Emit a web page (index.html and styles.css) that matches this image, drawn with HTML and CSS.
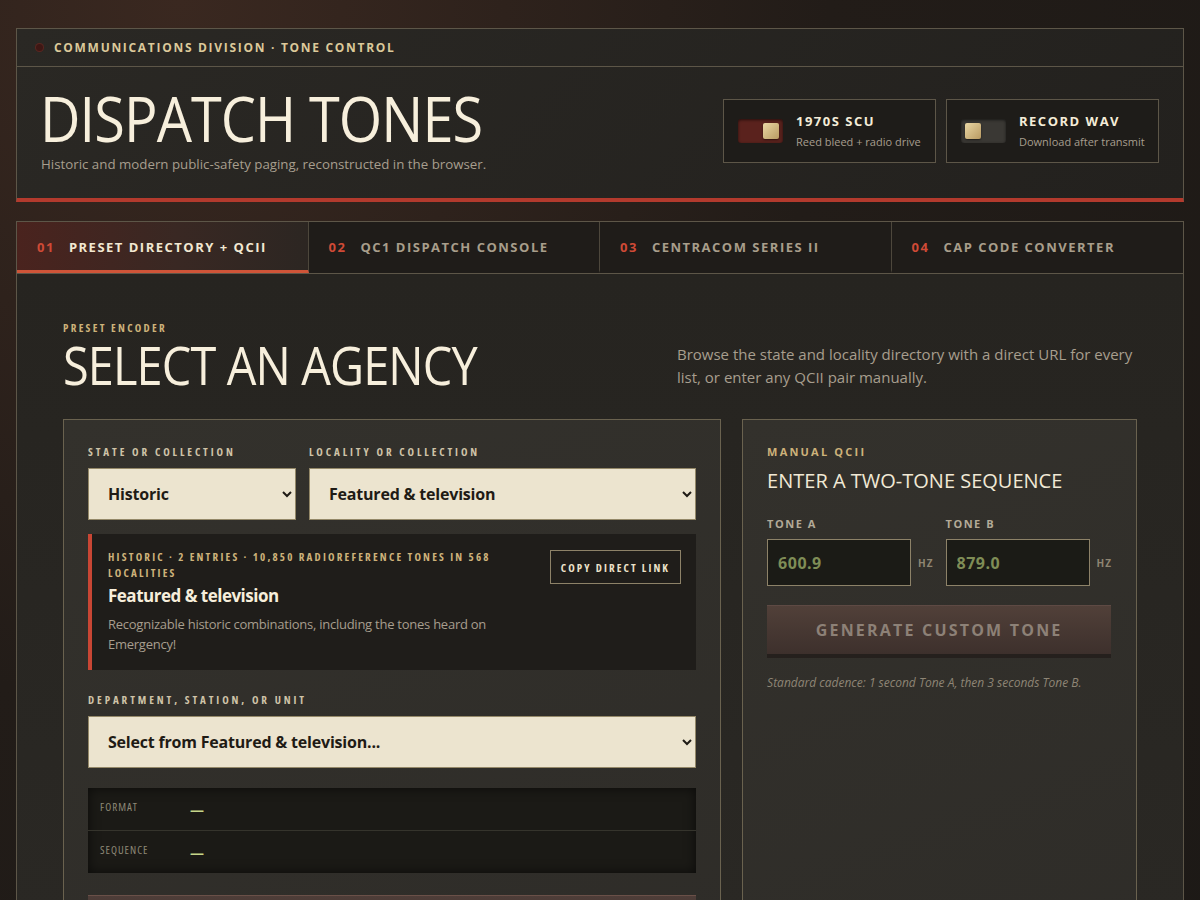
FILE: index.html
```html
<!DOCTYPE html>
<html lang="en">
<head>
    <meta charset="UTF-8">
    <meta name="viewport" content="width=device-width, initial-scale=1.0">
    <title>Dispatch Tones</title>
    <link rel="stylesheet" href="styles.css">
</head>
<body>

    <!-- Masthead -->
    <header class="masthead">
        <div class="masthead-bar">
            <span class="status-dot"></span>
            <span>Communications Division · Tone Control</span>
        </div>
        <div class="masthead-main">
            <div class="masthead-title">
                <h1>Dispatch Tones</h1>
                <p>Historic and modern public-safety paging, reconstructed in the browser.</p>
            </div>
            <div class="switches">
                <label class="switch-card">
                    <span class="switch on"><span class="knob"></span></span>
                    <span class="switch-text">
                        <strong>1970s SCU</strong>
                        <small>Reed bleed + radio drive</small>
                    </span>
                </label>
                <label class="switch-card">
                    <span class="switch"><span class="knob"></span></span>
                    <span class="switch-text">
                        <strong>Record WAV</strong>
                        <small>Download after transmit</small>
                    </span>
                </label>
            </div>
        </div>
    </header>

    <!-- Tabs -->
    <nav class="tabs">
        <button class="tab active"><span class="tab-num">01</span>Preset Directory + QCII</button>
        <button class="tab"><span class="tab-num">02</span>QC1 Dispatch Console</button>
        <button class="tab"><span class="tab-num">03</span>Centracom Series II</button>
        <button class="tab"><span class="tab-num">04</span>CAP Code Converter</button>
    </nav>

    <main class="panel">
        <div class="panel-head">
            <div>
                <div class="eyebrow">Preset Encoder</div>
                <h2>Select an Agency</h2>
            </div>
            <p class="panel-intro">Browse the state and locality directory with a direct URL for every list, or enter any QCII pair manually.</p>
        </div>

        <div class="panel-grid">
            <!-- Directory -->
            <section class="card">
                <div class="select-row">
                    <div class="field">
                        <label class="field-label" for="state">State or collection</label>
                        <select id="state" class="select">
                            <option>Historic</option>
                        </select>
                    </div>
                    <div class="field">
                        <label class="field-label" for="locality">Locality or collection</label>
                        <select id="locality" class="select">
                            <option>Featured &amp; television</option>
                        </select>
                    </div>
                </div>

                <div class="collection-info">
                    <div class="collection-text">
                        <div class="collection-meta">Historic · 2 entries · 10,850 RadioReference tones in 568 localities</div>
                        <h3>Featured &amp; television</h3>
                        <p>Recognizable historic combinations, including the tones heard on Emergency!</p>
                    </div>
                    <button class="ghost-button">Copy direct link</button>
                </div>

                <div class="field">
                    <label class="field-label" for="unit">Department, station, or unit</label>
                    <select id="unit" class="select">
                        <option>Select from Featured &amp; television...</option>
                    </select>
                </div>

                <div class="readout">
                    <div class="readout-row">
                        <span class="readout-label">Format</span>
                        <span class="readout-value">—</span>
                    </div>
                    <div class="readout-row">
                        <span class="readout-label">Sequence</span>
                        <span class="readout-value">—</span>
                    </div>
                </div>

                <button class="transmit">Transmit</button>
            </section>

            <!-- Manual entry -->
            <section class="card">
                <div class="eyebrow wide">Manual QCII</div>
                <h3 class="card-title">Enter a two-tone sequence</h3>
                <div class="tone-row">
                    <div class="tone-field">
                        <label class="field-label plain" for="toneA">Tone A</label>
                        <div class="tone-input">
                            <input id="toneA" class="tone" type="text" value="600.9">
                            <span class="unit">Hz</span>
                        </div>
                    </div>
                    <div class="tone-field">
                        <label class="field-label plain" for="toneB">Tone B</label>
                        <div class="tone-input">
                            <input id="toneB" class="tone" type="text" value="879.0">
                            <span class="unit">Hz</span>
                        </div>
                    </div>
                </div>
                <button class="generate">Generate custom tone</button>
                <p class="note">Standard cadence: 1 second Tone A, then 3 seconds Tone B.</p>
            </section>
        </div>
    </main>

</body>
</html>
```

FILE: styles.css
```css
/* General body style */
body {
    font-family: 'Open Sans', 'Noto Sans', sans-serif;
    margin: 0;
    padding: 28px 16px 40px;
    color: #e9dfc8;
    background: radial-gradient(ellipse at 15% 0%, #3a2820 0%, #221c18 45%, #1c1916 100%);
    background-color: #1f1b18;
    min-height: 100vh;
    box-sizing: border-box;
}

h1, h2, h3, p {
    margin: 0;
}

/* Masthead */
.masthead {
    border: 1px solid #5d5648;
    border-bottom: 4px solid #b33a2d;
    background: linear-gradient(135deg, #2a2824 0%, #23211e 100%);
}

.masthead-bar {
    display: flex;
    align-items: center;
    gap: 11px;
    height: 37px;
    padding: 0 19px;
    border-bottom: 1px solid #5d5648;
    font-size: 12px;
    font-weight: 700;
    letter-spacing: 1.7px;
    text-transform: uppercase;
    color: #dcc99a;
}

.status-dot {
    width: 7px;
    height: 7px;
    border-radius: 50%;
    background: #3e1714;
    box-shadow: 0 0 0 1px #5a2620;
}

.masthead-main {
    display: flex;
    align-items: center;
    justify-content: space-between;
    padding: 17px 24px 25px 24px;
}

/* big display headings: narrowed face */
.masthead h1,
.panel-head h2 {
    display: inline-block;
    font-weight: 400;
    line-height: 1.1;
    letter-spacing: -1px;
    text-transform: uppercase;
    color: #f7efdc;
    transform-origin: left center;
}

.masthead h1 {
    font-size: 62px;
    margin-left: -1px;
    transform: scaleX(0.9);
}

.masthead-title p {
    font-size: 13.3px;
    color: #a79e8e;
    margin-top: 3px;
}

.switches {
    display: flex;
    gap: 10px;
    margin-top: 4px;
}

.switch-card {
    display: flex;
    align-items: center;
    gap: 13px;
    width: 213px;
    height: 64px;
    box-sizing: border-box;
    padding: 0 14px;
    border: 1px solid #5d5648;
    background: #1e1c19;
    white-space: nowrap;
}

.switch {
    position: relative;
    width: 45px;
    height: 24px;
    border-radius: 3px;
    background: #3a3834;
    box-shadow: inset 0 1px 3px rgba(0, 0, 0, 0.6);
    flex-shrink: 0;
}

.switch.on {
    background: #5a221d;
}

.knob {
    position: absolute;
    top: 4px;
    left: 4px;
    width: 16px;
    height: 16px;
    border-radius: 2px;
    background: linear-gradient(135deg, #ead7a4 0%, #b89a62 100%);
    box-shadow: 0 1px 2px rgba(0, 0, 0, 0.5);
}

.switch.on .knob {
    left: auto;
    right: 4px;
}

.switch-text {
    display: flex;
    flex-direction: column;
    gap: 5px;
}

.switch-text strong {
    font-size: 13px;
    line-height: 16px;
    letter-spacing: 1.5px;
    text-transform: uppercase;
    color: #f4ecd8;
}

.switch-text small {
    font-size: 11px;
    line-height: 15px;
    color: #a79e8e;
}

/* Tabs */
.tabs {
    display: grid;
    grid-template-columns: repeat(4, 1fr);
    margin-top: 19px;
    border: 1px solid #5d5648;
    background: #1f1c19;
}

.tab {
    display: flex;
    align-items: center;
    gap: 14px;
    height: 51px;
    padding: 1px 20px 0;
    border: none;
    border-right: 1px solid #4d473c;
    border-bottom: 3px solid transparent;
    background: transparent;
    font-family: inherit;
    font-size: 13px;
    font-weight: 700;
    letter-spacing: 1.5px;
    text-transform: uppercase;
    color: #a89e8b;
    cursor: pointer;
}

.tab:last-child {
    border-right: none;
}

.tab.active {
    background: linear-gradient(90deg, #4a231e 0%, #392823 55%, #2c2622 100%);
    border-bottom-color: #cf5438;
    color: #f2e8d2;
}

.tab-num {
    color: #cf4a36;
}

/* Main panel */
.panel {
    border: 1px solid #5d5648;
    border-top: none;
    background: linear-gradient(180deg, #262420 0%, #2b2925 100%);
    padding: 46px 46px 40px;
}

.panel-head {
    display: flex;
    justify-content: space-between;
    align-items: flex-start;
}

.eyebrow {
    font-size: 11px;
    font-weight: 700;
    font-stretch: condensed;
    letter-spacing: 2.3px;
    text-transform: uppercase;
    color: #cdb27a;
}

.eyebrow.wide {
    font-stretch: normal;
    letter-spacing: 2.2px;
}

.panel-head h2 {
    display: block;
    font-size: 53px;
    margin-top: 1px;
    transform: scaleX(0.885);
}

.panel-intro {
    width: 460px;
    font-size: 15px;
    line-height: 23px;
    color: #a79e8e;
    margin-top: 23px;
}

.panel-grid {
    display: grid;
    grid-template-columns: 5fr 3fr;
    gap: 21px;
    margin-top: 25px;
}

/* Cards */
.card {
    border: 1px solid #6a624f;
    background: linear-gradient(160deg, #33312c 0%, #2e2c28 100%);
    padding: 24px 24px 30px;
    min-height: 560px;
}

.select-row {
    display: grid;
    grid-template-columns: 208px 1fr;
    gap: 13px;
}

.field-label {
    display: block;
    font-size: 11px;
    font-weight: 700;
    font-stretch: condensed;
    letter-spacing: 2.9px;
    text-transform: uppercase;
    color: #cfc3a8;
    margin-bottom: 9px;
}

.field-label.plain {
    font-stretch: normal;
    letter-spacing: 1.5px;
    color: #b3aa98;
}

.select {
    width: 100%;
    height: 52px;
    padding: 0 8px 0 15px;
    border: 1px solid #948868;
    border-radius: 0;
    background: #ece4cf;
    font-family: inherit;
    font-size: 16px;
    font-weight: 700;
    letter-spacing: -0.2px;
    color: #1f1b15;
}

.collection-info {
    display: flex;
    justify-content: space-between;
    align-items: flex-start;
    gap: 20px;
    margin: 14px 0 22px;
    padding: 15px 15px 16px 16px;
    background: #1f1d1a;
    border-left: 4px solid #c84634;
}

.collection-text {
    max-width: 392px;
}

.collection-meta {
    font-size: 11px;
    font-weight: 700;
    font-stretch: condensed;
    line-height: 16px;
    letter-spacing: 2.2px;
    text-transform: uppercase;
    color: #cdb27a;
}

.collection-info h3 {
    font-size: 17px;
    font-weight: 700;
    line-height: 24px;
    letter-spacing: -0.5px;
    color: #f6eedb;
    margin-top: 3px;
}

.collection-info p {
    font-size: 13px;
    line-height: 20px;
    letter-spacing: -0.25px;
    color: #a79e8e;
    margin-top: 6px;
}

.ghost-button {
    flex-shrink: 0;
    height: 34px;
    padding: 0 10px;
    border: 1px solid #8d8268;
    background: transparent;
    font-family: inherit;
    font-size: 11px;
    font-weight: 700;
    font-stretch: condensed;
    letter-spacing: 2.1px;
    text-transform: uppercase;
    color: #ece2ca;
    margin-top: 1px;
}

/* Readout */
.readout {
    margin-top: 20px;
    background: #1b1a16;
    box-shadow: inset 0 0 12px rgba(0, 0, 0, 0.6);
}

.readout-row {
    display: flex;
    align-items: center;
    height: 42px;
    padding: 0 12px;
    border-bottom: 1px solid #35342c;
}

.readout-row:last-child {
    border-bottom: none;
}

.readout-label {
    width: 90px;
    font-size: 11px;
    font-stretch: condensed;
    letter-spacing: 1px;
    text-transform: uppercase;
    color: #8e8977;
    margin-top: -6px;
}

.readout-value {
    font-size: 14px;
    font-weight: 700;
    color: #c6d68a;
}

.transmit {
    width: 100%;
    height: 52px;
    margin-top: 22px;
    border: none;
    border-top: 1px solid #6a5048;
    background: linear-gradient(180deg, #4e3d38 0%, #3c2f2b 100%);
    font-family: inherit;
    font-size: 16px;
    font-weight: 700;
    letter-spacing: 3px;
    text-transform: uppercase;
    color: #8a7e74;
}

/* Manual QCII */
.card-title {
    font-size: 20px;
    font-weight: 400;
    text-transform: uppercase;
    color: #f1e9d5;
    margin: 8px 0 22px;
}

.tone-row {
    display: flex;
    gap: 12px;
}

.tone-field .field-label {
    margin-bottom: 8px;
}

.tone-input {
    display: flex;
    align-items: center;
    gap: 7px;
}

.tone {
    width: 144px;
    height: 47px;
    box-sizing: border-box;
    padding: 0 10px;
    border: 1px solid #8d8268;
    background: #1b1b16;
    font-family: inherit;
    font-size: 16px;
    font-weight: 700;
    letter-spacing: 0.5px;
    color: #7f8d56;
}

.unit {
    font-size: 10px;
    font-weight: 700;
    letter-spacing: 1px;
    text-transform: uppercase;
    color: #8e8572;
}

.generate {
    width: 344px;
    height: 49px;
    margin-top: 19px;
    border: none;
    border-top: 1px solid #5e4a44;
    background: linear-gradient(180deg, #514039 0%, #3d302c 100%);
    box-shadow: 0 4px 0 #25201d;
    font-family: inherit;
    font-size: 16px;
    font-weight: 700;
    letter-spacing: 2.2px;
    text-transform: uppercase;
    color: #8d8177;
}

.note {
    font-size: 12px;
    font-style: italic;
    color: #8e8575;
    margin-top: 20px;
}
```
